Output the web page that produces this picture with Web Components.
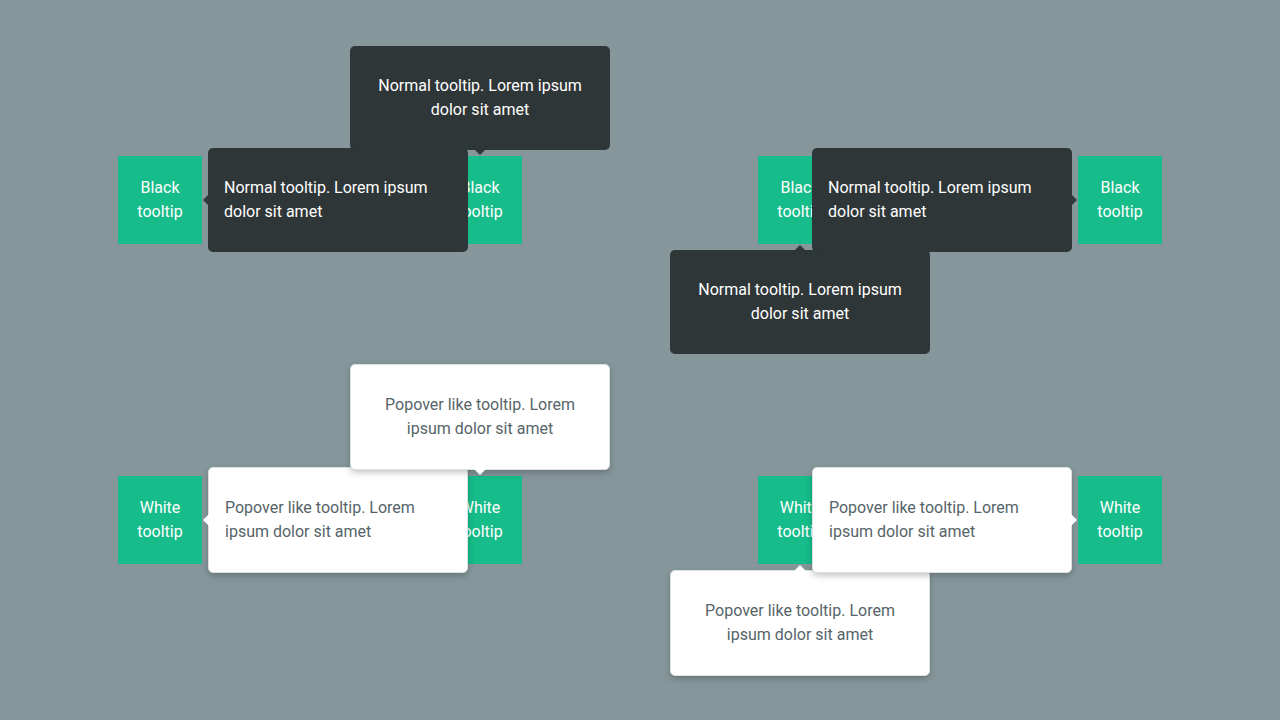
<!DOCTYPE html>
<html lang="en">
<head>
<meta charset="utf-8">
<title>Tooltips</title>
<style>
  body { margin: 0; background: #86979b; font: 16px/24px Roboto, sans-serif; }
</style>
</head>
<body>
<tooltip-board>
  <tip-button tone="black" side="right" label="Black tooltip">Normal tooltip. Lorem ipsum dolor sit amet</tip-button>
  <tip-button tone="black" side="top" label="Black tooltip">Normal tooltip. Lorem ipsum dolor sit amet</tip-button>
  <tip-button tone="black" side="bottom" label="Black tooltip">Normal tooltip. Lorem ipsum dolor sit amet</tip-button>
  <tip-button tone="black" side="left" label="Black tooltip">Normal tooltip. Lorem ipsum dolor sit amet</tip-button>
  <tip-button tone="white" side="right" label="White tooltip">Popover like tooltip. Lorem ipsum dolor sit amet</tip-button>
  <tip-button tone="white" side="top" label="White tooltip">Popover like tooltip. Lorem ipsum dolor sit amet</tip-button>
  <tip-button tone="white" side="bottom" label="White tooltip">Popover like tooltip. Lorem ipsum dolor sit amet</tip-button>
  <tip-button tone="white" side="left" label="White tooltip">Popover like tooltip. Lorem ipsum dolor sit amet</tip-button>
</tooltip-board>
<script>
class TooltipBoard extends HTMLElement {
  constructor() {
    super();
    this.attachShadow({ mode: 'open' }).innerHTML = `
      <style>
        :host {
          display: grid;
          grid-template-columns: repeat(4, 1fr);
          grid-auto-rows: 320px;
          place-items: center;
          align-content: center;
          min-height: 100vh;
          overflow: hidden;
        }
      </style>
      <slot></slot>`;
  }
}

class TipBubble extends HTMLElement {
  constructor() {
    super();
    this.attachShadow({ mode: 'open' }).innerHTML = `
      <style>
        :host {
          --fill: #2f3638;
          display: block;
          position: absolute;
          z-index: 1;
          box-sizing: border-box;
          width: 260px;
          padding: 28px 16px;
          border-radius: 5px;
          background: var(--fill);
          color: #fff;
        }
        :host([tone="white"]) {
          --fill: #fff;
          border: 1px solid #d9e1e2;
          color: #566469;
          box-shadow: 0 3px 6px rgba(0, 0, 0, .22);
        }
        :host([side="top"]), :host([side="bottom"]) {
          left: 50%;
          transform: translateX(-50%);
          text-align: center;
        }
        :host([side="left"]), :host([side="right"]) {
          top: 50%;
          transform: translateY(-50%);
        }
        :host([side="top"]) { bottom: calc(100% + 6px); }
        :host([side="bottom"]) { top: calc(100% + 6px); }
        :host([side="left"]) { right: calc(100% + 6px); }
        :host([side="right"]) { left: calc(100% + 6px); }
        p { margin: 0; }
        .arrow {
          position: absolute;
          box-sizing: border-box;
          width: 0;
          height: 0;
          border: 5px solid transparent;
        }
        :host([tone="white"]) .arrow { border-width: 6px; }
        :host([side="top"]) .arrow { top: 100%; left: 50%; transform: translateX(-50%); border-top-color: var(--fill); }
        :host([side="bottom"]) .arrow { bottom: 100%; left: 50%; transform: translateX(-50%); border-bottom-color: var(--fill); }
        :host([side="left"]) .arrow { left: 100%; top: 50%; transform: translateY(-50%); border-left-color: var(--fill); }
        :host([side="right"]) .arrow { right: 100%; top: 50%; transform: translateY(-50%); border-right-color: var(--fill); }
      </style>
      <p><slot></slot></p>
      <span class="arrow"></span>`;
  }
}

class TipButton extends HTMLElement {
  constructor() {
    super();
    this.attachShadow({ mode: 'open' }).innerHTML = `
      <style>
        :host { display: block; position: relative; }
        button {
          display: block;
          width: 84px;
          padding: 20px 16px;
          border: 0;
          background: #16bc89;
          color: #fff;
          font: inherit;
          text-align: center;
          cursor: pointer;
        }
      </style>
      <button type="button" aria-describedby="tip"></button>
      <tip-bubble id="tip" role="tooltip"><slot></slot></tip-bubble>`;
  }
  connectedCallback() {
    this.shadowRoot.querySelector('button').textContent = this.getAttribute('label');
    const bubble = this.shadowRoot.querySelector('tip-bubble');
    bubble.setAttribute('tone', this.getAttribute('tone'));
    bubble.setAttribute('side', this.getAttribute('side'));
  }
}

customElements.define('tooltip-board', TooltipBoard);
customElements.define('tip-bubble', TipBubble);
customElements.define('tip-button', TipButton);
</script>
</body>
</html>
